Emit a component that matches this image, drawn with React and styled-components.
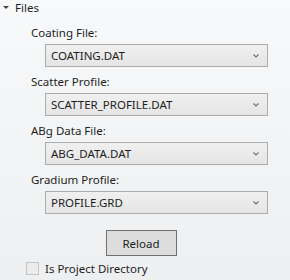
import React from "react"
import styled, { createGlobalStyle } from "styled-components"

const GlobalStyle = createGlobalStyle`
  html, body {
    margin: 0;
    padding: 0;
  }
  body {
    font-family: "Noto Sans", "Liberation Sans", sans-serif;
    font-size: 11.5px;
    color: #1e1e1e;
  }
`

const Panel = styled.div`
  width: 290px;
  height: 280px;
  box-sizing: border-box;
  background: linear-gradient(to bottom, #f8f9fa 0%, #eeeff0 100%);
  display: flex;
  flex-direction: column;
`

const Header = styled.div`
  display: flex;
  align-items: center;
  height: 15px;
  line-height: 15px;
  padding: 0 0 0 3px;

  span {
    margin-left: 6px;
  }
`

const Arrow = styled.div`
  width: 0;
  height: 0;
  border-left: 3px solid transparent;
  border-right: 3px solid transparent;
  border-top: 3px solid #444;
`

const Body = styled.div`
  display: flex;
  flex-direction: column;
  padding: 10px 0 0 31px;
`

const Field = styled.div`
  display: flex;
  flex-direction: column;
  margin-bottom: 7px;
`

const Label = styled.div`
  height: 16px;
  line-height: 16px;
  margin-bottom: 3px;
`

const Combo = styled.div`
  margin-left: 14px;
  width: 223px;
  height: 23px;
  box-sizing: border-box;
  border: 1px solid #acacac;
  background: linear-gradient(to bottom, #f0f0f0, #e5e5e5);
  display: flex;
  align-items: center;
  justify-content: space-between;
  padding: 0 8px 0 5px;
`

const Chevron = () => (
  <svg width="6" height="4" viewBox="0 0 6 4">
    <path d="M0.5 0.5 L3 3 L5.5 0.5" fill="none" stroke="#707070" strokeWidth="1.1" />
  </svg>
)

const ButtonRow = styled.div`
  display: flex;
  justify-content: center;
  margin-top: 9px;
  padding-right: 8px;
`

const Button = styled.button`
  width: 71px;
  height: 26px;
  box-sizing: border-box;
  border: 1px solid #707070;
  background: #dddddd;
  font: inherit;
  color: #1e1e1e;
  padding: 0;
`

const CheckRow = styled.label`
  display: flex;
  align-items: center;
  margin: 5px 0 0 26px;
  gap: 6px;
  height: 14px;
`

const Box = styled.span`
  width: 13px;
  height: 13px;
  box-sizing: border-box;
  border: 1px solid #c4c4c4;
  background: #ececec;
`

const files = [
  ["Coating File:", "COATING.DAT"],
  ["Scatter Profile:", "SCATTER_PROFILE.DAT"],
  ["ABg Data File:", "ABG_DATA.DAT"],
  ["Gradium Profile:", "PROFILE.GRD"],
]

export default function App() {
  return (
    <>
      <GlobalStyle />
      <Panel>
        <Header>
          <Arrow />
          <span>Files</span>
        </Header>
        <Body>
          {files.map(([label, value]) => (
            <Field key={label}>
              <Label>{label}</Label>
              <Combo>
                <span>{value}</span>
                <Chevron />
              </Combo>
            </Field>
          ))}
        </Body>
        <ButtonRow>
          <Button>Reload</Button>
        </ButtonRow>
        <CheckRow>
          <Box />
          <span>Is Project Directory</span>
        </CheckRow>
      </Panel>
    </>
  )
}
